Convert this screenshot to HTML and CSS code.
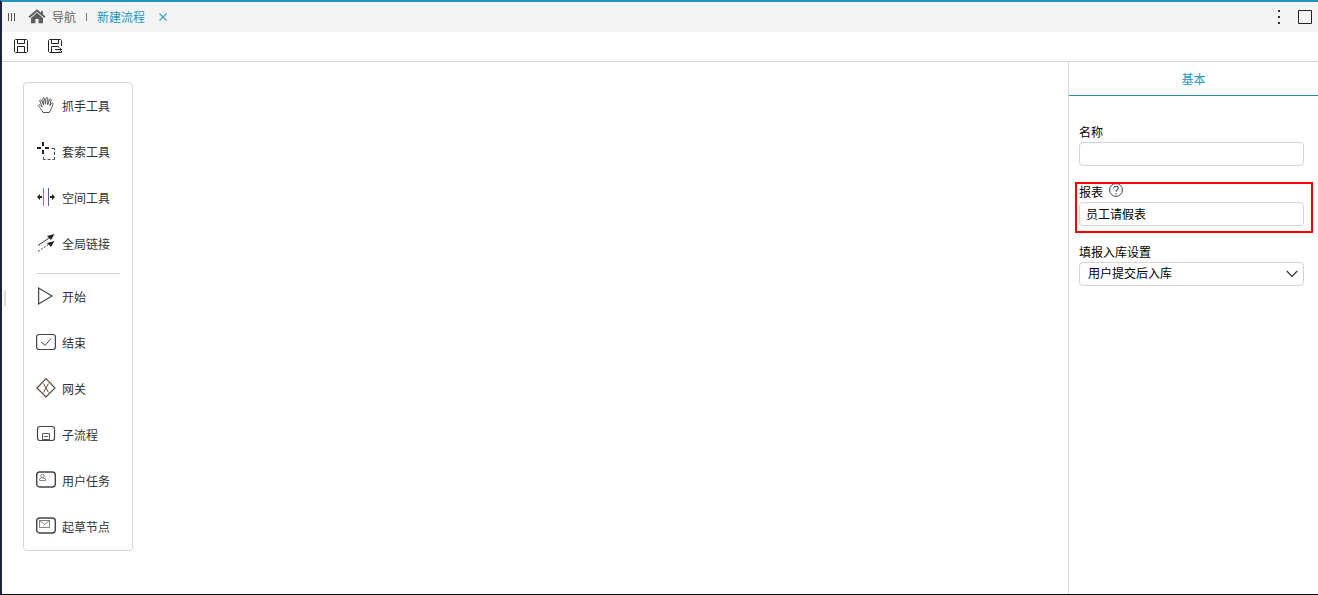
FILE: index.html
```html
<!DOCTYPE html>
<html lang="zh-CN">
<head>
<meta charset="utf-8">
<title>新建流程</title>
<link rel="stylesheet" href="styles.css">
</head>
<body>
<div class="app">
  <header class="tabbar">
    <svg class="grip" width="9" height="8" viewBox="0 0 9 8" aria-hidden="true"><path d="M1.5 0v8M4.5 0v8M7.5 0v8" stroke="#555"/></svg>
    <a class="tab" href="#nav">
      <svg width="18" height="16" viewBox="0 0 18 16" aria-hidden="true"><path d="M9 3.8 3 9v5.2h4.4V10h3.2v4.2H15V9z" fill="#5c5c5c"/><path d="M1 8.3 9 1.5l8 6.8M14 2v4" fill="none" stroke="#5c5c5c" stroke-width="1.8"/></svg>
      <span>导航</span>
    </a>
    <span class="tab-sep"></span>
    <a class="tab tab-active" href="#new">新建流程</a>
    <button class="icon-btn tab-close" aria-label="关闭"><svg width="8" height="8" viewBox="0 0 8 8"><path d="m.5.5 7 7m0-7-7 7" stroke="#3f9fca" stroke-width="1.2"/></svg></button>
    <span class="spacer"></span>
    <button class="icon-btn" aria-label="更多"><svg width="4" height="15" viewBox="0 0 4 15"><path d="M1 0h2v2H1zm0 6h2v2H1zm0 6h2v2H1z" fill="#333"/></svg></button>
    <button class="icon-btn" aria-label="最大化"><svg width="14" height="14" viewBox="0 0 14 14"><path d="M.5.5h13v13H.5z" fill="none" stroke="#222"/></svg></button>
  </header>

  <div class="toolbar">
    <button class="icon-btn" aria-label="保存"><svg width="14" height="14" viewBox="0 0 14 14" fill="none" stroke="#222"><path d="M1.5.5h11l1 1v11l-1 1h-11l-1-1v-11zM3.500.5v4h7v-4M3.500 13.500v-6h7v6"/></svg></button>
    <button class="icon-btn" aria-label="另存为"><svg width="15" height="14" viewBox="0 0 15 14" fill="none" stroke="#222"><path d="M13.500 7V1.500l-1-1h-11l-1 1v11l1 1H13.500V12M3.500.5v4h7v-4M3.500 13.500v-6h7v1M7 10.500h6.500M11.500 8.500l2 2-2 2"/></svg></button>
  </div>

  <div class="workspace">
    <main class="canvas">
      <span class="splitter"></span>
      <nav class="palette">
        <button class="tool"><svg width="20" height="20" viewBox="0 0 20 20" fill="none" stroke="#555" stroke-width="1"><path d="M7 17.500C6.300 15 4 13.300 2.700 11.300c-.7-1.300.7-2 1.600-1.100l2 1.600L3.800 6c-.4-1.200 1.200-1.700 1.700-.5l2.100 4.200L6.800 3.800c-.1-1.300 1.500-1.500 1.700-.3l1 5.800.5-6c.1-1.200 1.800-1.100 1.800.1l-.1 6.200 1.800-5c.4-1.100 1.900-.7 1.600.5l-1.300 5.600 1.700-2.300c.8-1 2-.2 1.500.9-1 2.200-1.700 4.700-3.700 8.200z"/></svg><span>抓手工具</span></button>
        <button class="tool"><svg width="20" height="20" viewBox="0 0 20 20" fill="none" stroke="#222"><path d="M7 1v4m0 4v4M1 7h4m4 0h4" stroke-width="2"/><path d="M15.500 7.500h3V9M18.500 11v3M18.500 16v2.500H16.500M14.500 18.500h-3M9.500 18.500h-2V16" stroke="#444"/></svg><span>套索工具</span></button>
        <button class="tool"><svg width="20" height="20" viewBox="0 0 20 20" fill="none"><path d="M7.500 1v18" stroke="#3a9ab8"/><path d="M12.500 1v18" stroke="#55608c"/><path d="M2 10h4m8 0h4" stroke="#222" stroke-width="2"/><path d="M1 10l3-3v6zM19 10l-3-3v6z" fill="#222"/></svg><span>空间工具</span></button>
        <button class="tool"><svg width="20" height="20" viewBox="0 0 20 20" fill="none" stroke="#333"><path d="m2 12.500 11-7.500"/><path d="m2 18.500 11-7.500" stroke-dasharray="2 1.500"/><path d="m18.500 1-3.500 6-4-4zM18.500 8 15 14l-4-4z" fill="#222" stroke="none"/></svg><span>全局链接</span></button>
        <hr class="divider">
        <button class="tool"><svg width="20" height="20" viewBox="0 0 20 20" fill="none" stroke="#444"><path d="m2.600 2 13.400 8-13.400 8z" stroke-width="1.2"/></svg><span>开始</span></button>
        <button class="tool"><svg width="20" height="20" viewBox="0 0 20 20" fill="none" stroke="#444"><rect x=".6" y="2.500" width="18.800" height="15" rx="2.500" stroke-width="1.200"/><path d="m5.500 10 3.500 3.500 6-7"/></svg><span>结束</span></button>
        <button class="tool"><svg width="20" height="20" viewBox="0 0 20 20" fill="none" stroke="#5a4634"><path d="m10 .7 9 9.300-9 9-9-9z" stroke-width="1.200"/><path d="m7.500 5.500 5 9m0-9-5 9"/></svg><span>网关</span></button>
        <button class="tool"><svg width="20" height="20" viewBox="0 0 20 20" fill="none" stroke="#444"><rect x="1.500" y="2.500" width="17" height="14" rx="2.500" stroke-width="1.200"/><path d="M6.500 16.500v-7h7v7M8 12.500h4M6.500 15.500h7" stroke="#5d5d70"/></svg><span>子流程</span></button>
        <button class="tool"><svg width="20" height="20" viewBox="0 0 20 20" fill="none" stroke="#444"><rect x=".7" y="2" width="18.600" height="15" rx="3" stroke-width="1.400"/><g stroke="#777" stroke-width=".9"><circle cx="6.500" cy="6" r="1.700"/><path d="M3.500 10.500V9l2-1.200h2l2 1.200v1.500z"/></g></svg><span>用户任务</span></button>
        <button class="tool"><svg width="20" height="20" viewBox="0 0 20 20" fill="none" stroke="#444"><rect x=".7" y="2" width="18.600" height="15" rx="3" stroke-width="1.400"/><path d="M3.500 4.500h10v7h-10zl5 4 5-4" stroke="#666" stroke-width=".8"/></svg><span>起草节点</span></button>
      </nav>
    </main>

    <aside class="panel">
      <div class="panel-tabs"><button class="panel-tab">基本</button></div>
      <form class="panel-body">
        <div class="field">
          <label class="label" for="name">名称</label>
          <input class="control" id="name" type="text">
        </div>
        <div class="field field-marked">
          <div class="label-row">
            <label class="label" for="report">报表</label>
            <svg class="help" width="14" height="14" viewBox="0 0 14 14" fill="none" stroke="#3c4650" aria-hidden="true"><circle cx="7" cy="7" r="6.400"/><path d="M4.800 5.300c.1-2.700 4.400-2.600 4.400-.1C9.200 7 7 6.800 7 8.800M7 10v1.300" stroke-width="1.100"/></svg>
          </div>
          <input class="control" id="report" type="text" value="员工请假表">
        </div>
        <div class="field">
          <label class="label" for="storage">填报入库设置</label>
          <div class="select-wrap">
            <select class="control select" id="storage"><option>用户提交后入库</option></select>
            <svg class="chevron" width="12" height="8" viewBox="0 0 12 8" fill="none" aria-hidden="true"><path d="m.8 1 5.200 5.500L11.200 1" stroke="#333" stroke-width="1.200"/></svg>
          </div>
        </div>
      </form>
    </aside>
  </div>
</div>
</body>
</html>
```
FILE: styles.css
```css
* {
  box-sizing: border-box;
}

body {
  margin: 0;
  background: #fff;
}

body,
button,
input,
select {
  font-family: "Noto Sans CJK SC", sans-serif;
  font-size: 12px;
  line-height: 20px;
  color: #333;
}

button {
  padding: 0;
  border: 0;
  background: none;
}

svg {
  display: block;
  flex: none;
}

.app {
  display: flex;
  flex-direction: column;
  min-height: 100vh;
  border-top: 2px solid #2196c1;
  border-left: 2px solid #1c2340;
  border-bottom: 1px solid #05070c;
}

.tabbar {
  display: flex;
  align-items: center;
  height: 30px;
  padding: 0 6px 0 5px;
  background: #f4f4f4;
}

.tab {
  display: flex;
  align-items: center;
  gap: 6px;
  color: #666;
  text-decoration: none;
}

.grip {
  margin-right: 12px;
}

.tab-sep {
  width: 1px;
  height: 8px;
  margin: 0 10px;
  background: #777;
}

.tab-active {
  color: #2196c1;
}

.tab-close {
  margin-left: 14px;
}

.spacer {
  flex: 1;
}

.icon-btn + .icon-btn {
  margin-left: 17px;
}

.toolbar {
  display: flex;
  align-items: center;
  gap: 3px;
  height: 30px;
  padding: 0 12px 2px;
  border-bottom: 1px solid #d6d6d6;
}

.workspace {
  display: flex;
  flex: 1;
}

.canvas {
  position: relative;
  flex: 1;
  padding: 20px 21px;
}

.splitter {
  position: absolute;
  top: 228px;
  left: 2px;
  width: 2px;
  height: 16px;
  background: #dedede;
}

.palette {
  width: 110px;
  border: 1px solid #d4d4d4;
  border-radius: 4px;
}

.tool {
  display: flex;
  align-items: center;
  gap: 6px;
  width: 100%;
  height: 46px;
  padding: 0 12px;
}

.tool svg {
  margin-bottom: 2px;
}

.divider {
  height: 1px;
  margin: 6px 12px 0;
  border: 0;
  background: #d4d4d4;
}

.panel {
  width: 250px;
  border-left: 1px solid #d6d6d6;
}

.panel-tabs {
  display: flex;
  justify-content: center;
  height: 34px;
  border-bottom: 1px solid #2b8dac;
}

.panel-tab {
  color: #2196c1;
}

.panel-body {
  display: flex;
  flex-direction: column;
  gap: 16px;
  padding: 26px 14px 0 10px;
}

.field {
  position: relative;
}

.field-marked::after {
  content: "";
  position: absolute;
  inset: 0 -9px -7px -4px;
  border: 2px solid #f00;
  pointer-events: none;
}

.label {
  display: block;
  color: #000;
}

.label-row {
  display: flex;
  gap: 6px;
}

.help {
  margin-top: 1px;
}

.control {
  display: block;
  width: 100%;
  height: 24px;
  padding: 0 6px 2px;
  border: 1px solid #d4d4d4;
  border-radius: 4px;
  background: #fff;
  color: #000;
}

.select {
  padding: 0 8px 2px;
  appearance: none;
}

.select-wrap {
  position: relative;
}

.chevron {
  position: absolute;
  top: 8px;
  right: 6px;
  pointer-events: none;
}
```
